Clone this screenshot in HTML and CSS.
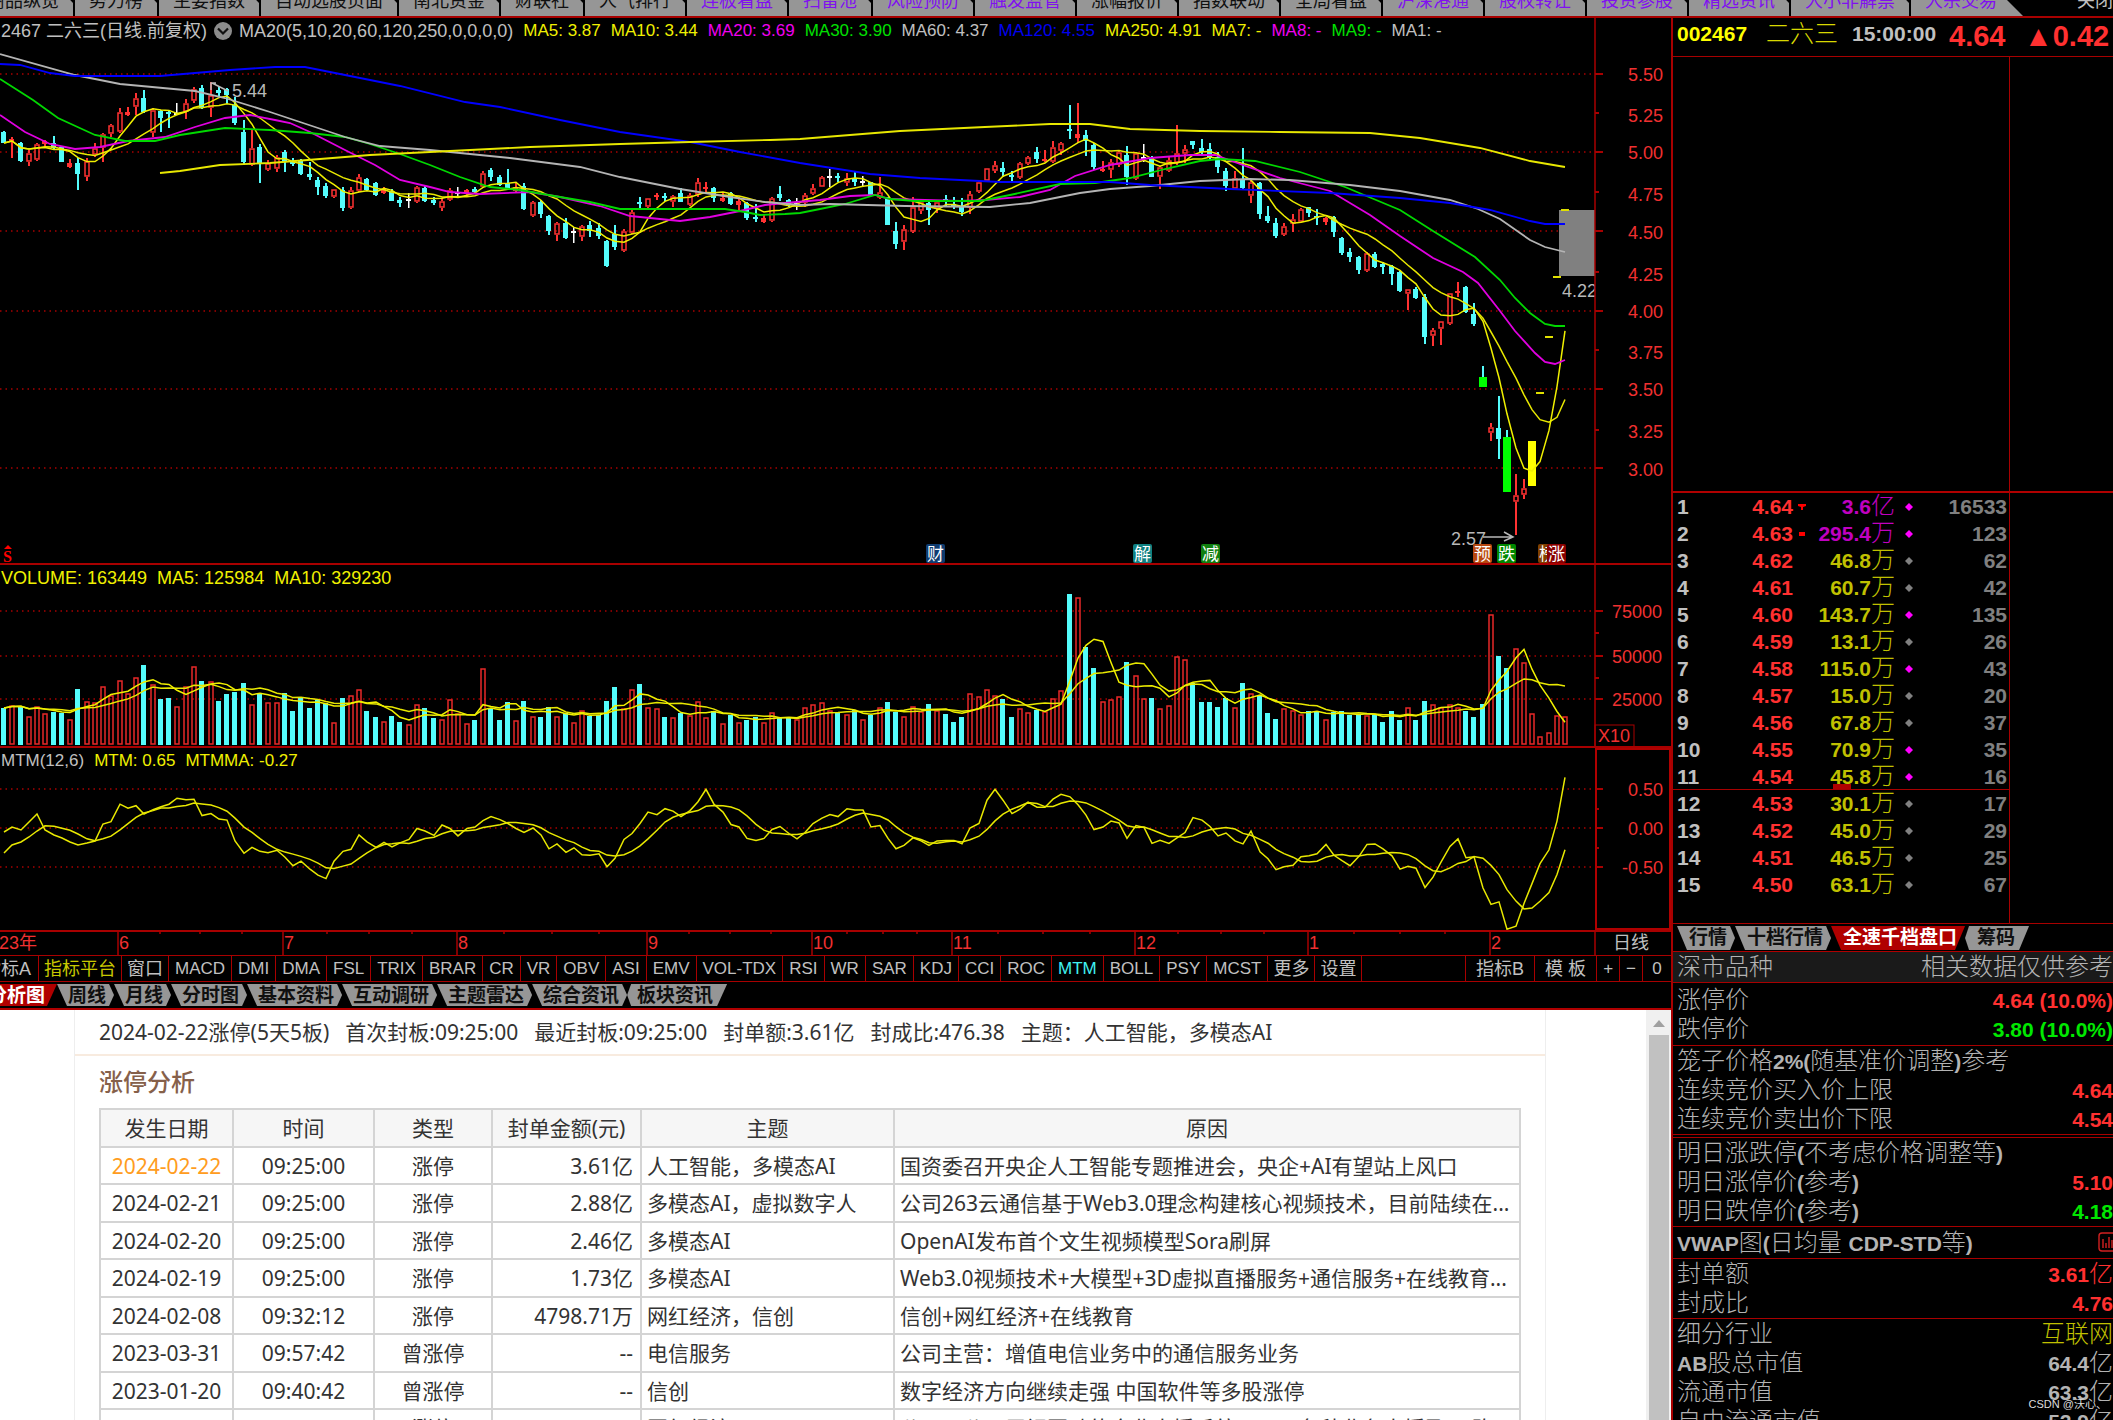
FILE: index.html
```html
<!DOCTYPE html>
<html lang="zh-CN">
<head>
<meta charset="utf-8">
<title>002467 二六三</title>
<link rel="stylesheet" href="styles.css">
</head>
<body>
<div class="app">
  <nav class="topbar">
    <a class="toptab toptab-cut" href="#">商品纵览</a><a class="toptab" href="#">势力榜</a><a class="toptab" href="#">主要指数</a><a class="toptab" href="#">自动选股页面</a><a class="toptab" href="#">南北资金</a><a class="toptab" href="#">财联社</a><a class="toptab" href="#">人气排行</a><a class="toptab hot" href="#">连板看盘</a><a class="toptab hot" href="#">扫雷池</a><a class="toptab hot" href="#">风险预防</a><a class="toptab hot" href="#">触发监管</a><a class="toptab" href="#">涨幅报价</a><a class="toptab" href="#">指数联动</a><a class="toptab" href="#">全局看盘</a><a class="toptab hot" href="#">沪深港通</a><a class="toptab hot" href="#">股权转让</a><a class="toptab hot" href="#">投资参股</a><a class="toptab hot" href="#">精选资讯</a><a class="toptab hot" href="#">大小非解禁</a><a class="toptab hot toptab-last" href="#">大宗交易</a>
    <button class="close" type="button">关闭</button>
  </nav>

  <main class="left">
    <section class="panel">
      <div class="legend">
        <span class="name">2467 二六三(日线.前复权)</span>
        <button class="drop" type="button" aria-label="展开"><svg width="20" height="20" viewBox="0 0 20 20"><circle cx="10" cy="10" r="9" fill="#8c8c8c"/><path d="M5 7.5l5 5 5-5" fill="none" stroke="#111" stroke-width="2.2"/></svg></button>
        <span class="name">MA20(5,10,20,60,120,250,0,0,0,0)</span>
        <span class="y">MA5: 3.87</span><span class="y">MA10: 3.44</span><span class="m">MA20: 3.69</span><span class="g">MA30: 3.90</span><span>MA60: 4.37</span><span class="b">MA120: 4.55</span><span class="y">MA250: 4.91</span><span class="y">MA7: -</span><span class="m">MA8: -</span><span class="g">MA9: -</span><span>MA1: -</span>
      </div>
      <svg id="price" class="chart" viewBox="0 18 1671 547"></svg>
    </section>
    <section class="panel">
      <div class="legend legend-vol"><span class="y">VOLUME: 163449</span><span class="y">MA5: 125984</span><span class="y">MA10: 329230</span></div>
      <svg id="volume" class="chart" viewBox="0 565 1671 183"></svg>
    </section>
    <section class="panel">
      <div class="legend"><span>MTM(12,6)</span><span class="y">MTM: 0.65</span><span class="y">MTMMA: -0.27</span></div>
      <svg id="mtm" class="chart" viewBox="0 748 1671 182"></svg>
    </section>
    <svg id="dates" class="chart" viewBox="0 930 1671 25"></svg>

    <div class="indicators">
      <button class="cjk ind-cut" type="button">指标A</button><button class="cjk on" type="button">指标平台</button><button class="cjk" type="button">窗口</button><button type="button">MACD</button><button type="button">DMI</button><button type="button">DMA</button><button type="button">FSL</button><button type="button">TRIX</button><button type="button">BRAR</button><button type="button">CR</button><button type="button">VR</button><button type="button">OBV</button><button type="button">ASI</button><button type="button">EMV</button><button type="button">VOL-TDX</button><button type="button">RSI</button><button type="button">WR</button><button type="button">SAR</button><button type="button">KDJ</button><button type="button">CCI</button><button type="button">ROC</button><button class="sel" type="button">MTM</button><button type="button">BOLL</button><button type="button">PSY</button><button type="button">MCST</button><button class="cjk" type="button">更多</button><button class="cjk" type="button">设置</button>
      <span class="fill"></span>
      <button class="cjk wide" type="button">指标B</button><button class="cjk wide" type="button">模 板</button><button type="button">+</button><button type="button">−</button><button class="end" type="button">0</button>
    </div>

    <nav class="tabs">
      <a class="tab active tab-cut" href="#">分析图</a><a class="tab" href="#">周线</a><a class="tab" href="#">月线</a><a class="tab" href="#">分时图</a><a class="tab" href="#">基本资料</a><a class="tab" href="#">互动调研</a><a class="tab" href="#">主题雷达</a><a class="tab" href="#">综合资讯</a><a class="tab last" href="#">板块资讯</a>
    </nav>

    <section class="report">
      <div class="sheet">
        <p class="summary"><span>2024-02-22涨停(5天5板)</span><span>首次封板:09:25:00</span><span>最近封板:09:25:00</span><span>封单额:3.61亿</span><span>封成比:476.38</span><span>主题：人工智能，多模态AI</span></p>
        <h2>涨停分析</h2>
        <table class="events">
          <colgroup><col class="c1"><col class="c2"><col class="c3"><col class="c4"><col class="c5"><col></colgroup>
          <thead><tr><th>发生日期</th><th>时间</th><th>类型</th><th>封单金额(元)</th><th>主题</th><th>原因</th></tr></thead>
          <tbody>
            <tr><td class="now">2024-02-22</td><td>09:25:00</td><td>涨停</td><td>3.61亿</td><td>人工智能，多模态AI</td><td>国资委召开央企人工智能专题推进会，央企+AI有望站上风口</td></tr>
            <tr><td>2024-02-21</td><td>09:25:00</td><td>涨停</td><td>2.88亿</td><td>多模态AI，虚拟数字人</td><td>公司263云通信基于Web3.0理念构建核心视频技术，目前陆续在...</td></tr>
            <tr><td>2024-02-20</td><td>09:25:00</td><td>涨停</td><td>2.46亿</td><td>多模态AI</td><td>OpenAI发布首个文生视频模型Sora刷屏</td></tr>
            <tr><td>2024-02-19</td><td>09:25:00</td><td>涨停</td><td>1.73亿</td><td>多模态AI</td><td>Web3.0视频技术+大模型+3D虚拟直播服务+通信服务+在线教育...</td></tr>
            <tr><td>2024-02-08</td><td>09:32:12</td><td>涨停</td><td>4798.71万</td><td>网红经济，信创</td><td>信创+网红经济+在线教育</td></tr>
            <tr><td>2023-03-31</td><td>09:57:42</td><td>曾涨停</td><td>--</td><td>电信服务</td><td>公司主营：增值电信业务中的通信服务业务</td></tr>
            <tr><td>2023-01-20</td><td>09:40:42</td><td>曾涨停</td><td>--</td><td>信创</td><td>数字经济方向继续走强 中国软件等多股涨停</td></tr>
            <tr><td>2022-11-25</td><td>09:36:10</td><td>涨停</td><td>2310.5万</td><td>网红经济</td><td>公司子公司展视互动的企业直播系统可用于各种业务直播及VR购</td></tr>
          </tbody>
        </table>
      </div>
      <div class="scroll"><span class="arrow"></span><span class="thumb"></span></div>
    </section>
  </main>

  <aside class="right">
    <header class="quote"><b class="code">002467</b><span class="stock">二六三</span><b class="time">15:00:00</b><b class="last-price">4.64</b><b class="change">▲0.42</b></header>
    <div class="book">
      <div class="bookmain">
        <div class="blank"></div>
        <table class="levels"><colgroup><col class="l1"><col class="l2"><col class="l3"><col class="l4"><col class="l5"><col></colgroup><tbody id="levels"></tbody></table>
      </div>
      <div class="bookside"><div class="blank"></div></div>
    </div>
    <nav class="tabs rtabs">
      <a class="tab" href="#">行情</a><a class="tab" href="#">十档行情</a><a class="tab active" href="#">全速千档盘口</a><a class="tab last" href="#">筹码</a>
    </nav>
    <dl class="info">
      <div class="grp head"><div><dt>深市品种</dt><dd>相关数据仅供参考</dd></div></div>
      <div class="grp two"><div><dt>涨停价</dt><dd class="up"><b>4.64 (10.0%)</b></dd></div><div><dt>跌停价</dt><dd class="down"><b>3.80 (10.0%)</b></dd></div></div>
      <div class="grp"><div><dt>笼子价格<b>2%(</b>随基准价调整<b>)</b>参考</dt><dd></dd></div><div><dt>连续竞价买入价上限</dt><dd class="up"><b>4.64</b></dd></div><div><dt>连续竞价卖出价下限</dt><dd class="up"><b>4.54</b></dd></div></div>
      <div class="grp double"><div><dt>明日涨跌停<b>(</b>不考虑价格调整等<b>)</b></dt><dd></dd></div><div><dt>明日涨停价<b>(</b>参考<b>)</b></dt><dd class="up"><b>5.10</b></dd></div><div><dt>明日跌停价<b>(</b>参考<b>)</b></dt><dd class="down"><b>4.18</b></dd></div></div>
      <div class="grp one"><div><dt><b>VWAP</b>图<b>(</b>日均量 <b>CDP-STD</b>等<b>)</b></dt><dd><svg class="mini" width="15" height="20" viewBox="0 0 15 20"><path d="M18 1H4Q1 1 1 4v12q0 3 3 3h14M5 16V7M8 16v-5M11 16V5M14 16V8" fill="none" stroke="#d02020" stroke-width="1.4"/></svg></dd></div></div>
      <div class="grp"><div><dt>封单额</dt><dd class="up"><b>3.61</b>亿</dd></div><div><dt>封成比</dt><dd class="up"><b>4.76</b></dd></div></div>
      <div class="grp"><div><dt>细分行业</dt><dd class="ind">互联网</dd></div><div><dt><b>AB</b>股总市值</dt><dd><b>64.4</b>亿</dd></div><div><dt>流通市值</dt><dd><b>63.3</b>亿</dd></div><div><dt>自由流通市值</dt><dd><b>52.9</b>亿</dd></div></div>
    </dl>
  </aside>
  <div class="mark">CSDN @沃心、</div>
</div>
<script src="chart.js"></script>
</body>
</html>
```
FILE: styles.css
```css
* { box-sizing: border-box; }
body { margin: 0; background: #000; color: #c0c0c0; font: 18px/24px "Liberation Sans", "Noto Sans CJK SC", sans-serif; }
a { text-decoration: none; color: inherit; }
button { font: inherit; color: inherit; background: none; border: 0; padding: 0; margin: 0; }

.app { position: relative; height: 100vh; overflow: hidden; display: grid; grid-template: 18px minmax(0, 1fr) / minmax(0, 1fr) 442px; }

/* page tabs along the top edge */
.topbar { grid-column: 1 / 3; display: flex; align-items: flex-end; overflow: hidden; border-bottom: 2px solid #a80000; white-space: nowrap; }
.toptab { flex: none; height: 30px; line-height: 30px; padding: 0 16px 0 14px; background: #969696; color: #101010; clip-path: polygon(0 0, calc(100% - 18px) 0, calc(100% - 2px) 17px, calc(100% - 2px) 100%, 0 100%); }
.toptab-cut { width: 75px; display: flex; justify-content: flex-end; }
.toptab.hot { color: #8010f0; }
.toptab-last { width: 112px; clip-path: polygon(0 0, calc(100% - 30px) 0, 100% 100%, 0 100%); }
.close { flex: 1; height: 30px; line-height: 30px; text-align: right; }

.left { display: flex; flex-direction: column; min-width: 0; min-height: 0; }
.panel { position: relative; }
.chart { display: block; width: 100%; height: auto; flex: none; }
.chart text { font-family: "Liberation Sans", "Noto Sans CJK SC", sans-serif; font-size: 18px; }
.legend { position: absolute; left: 1px; top: 1px; display: flex; align-items: center; gap: 10px; font-size: 17px; white-space: nowrap; }
.legend .name { font-size: 18px; }
.legend-vol { font-size: 18px; }
.legend .drop { display: flex; margin: 0 -4px; }
.y { color: #f0f000; }
.m { color: #f000f0; }
.g { color: #00e000; }
.b { color: #0000f0; }

.indicators { display: flex; flex: none; height: 27px; border-top: 1px solid #a80000; border-bottom: 1px solid #a80000; font-size: 17px; overflow: hidden; }
.indicators button { flex: none; padding: 0 6px; border-right: 1px solid #a80000; white-space: nowrap; }
.indicators .cjk { font-size: 18px; padding: 0 5px; }
.indicators .ind-cut { width: 39px; display: flex; justify-content: flex-end; align-items: center; padding-right: 7px; }
.indicators .on { color: #c8c800; }
.indicators .sel { color: #40f0f0; }
.indicators .fill { flex: 1; border-right: 1px solid #a80000; }
.indicators .wide { padding: 0 10px; }
.indicators .end { width: 28px; border-right: 0; }

.tabs { display: flex; flex: none; height: 28px; padding: 2px 0; border-bottom: 2px solid #b00000; font-size: 19px; line-height: 24px; font-weight: 700; white-space: nowrap; }
.tab { padding: 0 8px 0 11px; background: #969696; color: #101010; clip-path: polygon(0 0, calc(100% - 5px) 0, 100% 50%, calc(100% - 5px) 100%, 10px 100%); }
.tab.active { background: #b00000; color: #fff; clip-path: polygon(0 0, 100% 0, calc(100% - 10px) 100%, 10px 100%); }
.tab.last { clip-path: polygon(4px 0, 100% 0, calc(100% - 10px) 100%, 4px 100%, 0 50%); padding-right: 14px; padding-left: 10px; }
.tab-cut { width: 57px; display: flex; justify-content: flex-end; padding-right: 12px; }
.tab-cut.active { clip-path: polygon(0 0, 100% 0, calc(100% - 10px) 100%, 0 100%); }

.report { flex: 1; min-height: 0; overflow: hidden; display: flex; justify-content: space-between; background: #fff; color: #333; font: 21px/30px "Noto Sans", "Noto Sans CJK SC", sans-serif; }
.sheet { flex: 1; margin: 0 100px 0 74px; border: solid #eee; border-width: 0 1px; }
.summary { margin: 0; padding: 7px 24px 7px; height: 46px; border-bottom: 2px solid #f8ebdf; display: flex; gap: 16px; white-space: nowrap; }
.sheet h2 { margin: 0 24px; height: 52px; line-height: 52px; font-size: 24px; font-weight: 500; color: #86604a; }
.events { width: calc(100% - 48px); margin: 0 24px; border-collapse: collapse; table-layout: fixed; }
.events tr { height: 37px; }
.events tr:nth-child(even) { height: 38px; }
.events th, .events td { border: 2px solid #d4d4d4; padding: 0 5px; font-weight: 400; text-align: center; white-space: nowrap; overflow: hidden; }
.events th { background: #f6f6f6; height: 38px; }
.events td:nth-child(4) { text-align: right; padding-right: 7px; }
.events td:nth-child(n+5) { text-align: left; }
.events .now { color: #ff9c20; }
.c1 { width: 133px; }
.c2 { width: 141px; }
.c3 { width: 118px; }
.c4 { width: 149px; }
.c5 { width: 253px; }
.scroll { width: 25px; background: #f0f0f0; display: flex; flex-direction: column; align-items: center; }
.arrow { margin: 10px 0 8px; border: 6px solid transparent; border-top: 0; border-bottom: 7px solid #a0a0a0; }
.thumb { flex: 1; width: 20px; background: #c1c1c1; }

.right { display: flex; flex-direction: column; min-height: 0; overflow: hidden; border-left: 2px solid #a80000; white-space: nowrap; }
.quote { display: flex; align-items: center; height: 39px; flex: none; padding: 0 0 6px 4px; border-bottom: 1px solid #a80000; font-size: 21px; }
.code { color: #ff0; width: 89px; }
.stock { color: #d8d800; font-size: 24px; font-weight: 300; width: 86px; }
.time { width: 97px; }
.last-price, .change { color: #ff3030; font-size: 29px; padding-top: 4px; }
.last-price { width: 75px; }

.book { display: flex; flex: none; border-bottom: 1px solid #a80000; }
.bookmain { width: 337px; border-right: 1px solid #a80000; padding-bottom: 25px; }
.bookside { flex: 1; }
.blank { height: 436px; border-bottom: 2px solid #b00000; }
.levels { border-collapse: collapse; table-layout: fixed; width: 100%; font-size: 21px; font-weight: 700; }
.levels td { padding: 0; text-align: right; line-height: 27px; height: 27px; }
.levels td:first-child { text-align: left; padding-left: 4px; }
.levels td:last-child { color: #808080; padding-right: 2px; }
.levels .price { color: #ff3030; }
.levels .unit { font-size: 24px; font-weight: 300; line-height: 20px; }
.levels .amt { color: #c0c000; }
.levels .big { color: #c000c0; }
.levels svg { display: block; margin: 0 auto; }
.levels .split td { box-shadow: inset 0 -1px #a80000; }
.levels .split .amt { background: linear-gradient(#b00000, #b00000) 22px 21px / 18px 5px no-repeat; }
.l1 { width: 49px; }
.l2 { width: 71px; }
.l3 { width: 18px; }
.l4 { width: 84px; }
.l5 { width: 28px; }

.rtabs { padding: 2px 0 1px 4px; height: 28px; border-bottom-width: 1px; }
.rtabs .tab { padding-left: 12px; }

.info { margin: 0; font-size: 24px; font-weight: 300; line-height: 29px; color: #b4b4b4; }
.info b { font-size: 21px; font-weight: 700; }
.grp { border-bottom: 1px solid #a80000; padding-bottom: 1px; }
.grp > div { display: flex; justify-content: space-between; height: 29px; padding-left: 4px; }
.head { background: #1a1a1a; }
.two { padding: 2px 0; }
.one { padding: 1px 0; }
.double { border-top: 1px solid #a80000; margin-top: 2px; }
.info dd { margin: 0; }
.info .up { color: #ff3030; }
.info .down { color: #00e800; }
.info .ind { color: #c0c000; }
.mini { display: block; margin-top: 4px; }

.mark { position: absolute; right: 6px; bottom: 6px; font-size: 11px; line-height: 20px; color: #ddd; }
```
FILE: chart.js
```js
// Candles: colour letter, wick top, body top, body bottom, wick bottom.
const CANDLES = `c131,132,143,143 r137,139,141,158 c142,143,161,162 r150,153,162,166 r143,144,160,161 r140,141,144,147 c136,143,148,150 c146,147,162,162 r159,163,167,168 c158,163,174,190
r158,161,177,181 r143,148,155,157 r133,134,148,162 r124,125,134,137 r108,112,132,133 r107,112,115,116 r93,98,107,115 c90,98,112,113 r108,110,133,137 c110,111,118,132
c110,112,114,128 w103,113,114,115 r99,103,112,119 r87,89,101,103 c85,88,108,109 r82,95,108,117 c86,90,93,97 c88,89,95,104 c97,105,123,125 c120,132,162,164
r130,148,165,166 c144,147,164,183 r160,163,170,171 r155,157,169,172 c150,152,161,172 c158,161,164,166 c159,161,174,175 c162,174,177,180 c177,180,187,195 c183,186,196,198
r189,189,197,198 c187,190,208,211 r187,190,208,209 r174,177,191,192 c178,179,190,191 c182,183,195,196 r187,189,193,194 c189,191,201,201 c197,200,203,207 w193,199,201,208
r186,187,202,203 c186,188,201,202 c197,200,203,205 r198,201,208,211 r188,190,200,201 w187,192,193,197 r189,190,193,195 c187,189,192,193 r171,173,187,188 c168,170,177,181
c175,177,185,186 c169,183,189,190 r183,187,191,192 c183,186,209,210 r201,202,216,217 c200,202,214,218 c215,216,231,235 r222,223,235,241 c218,223,238,239 w227,231,232,243
r225,226,237,241 c221,225,231,237 c223,228,236,239 c240,241,266,267 c225,234,247,250 r229,231,251,252 r209,212,233,234 c197,202,204,208 r198,198,207,208 r193,195,197,200
c193,196,198,201 r195,196,202,207 c188,193,202,202 r193,195,205,206 r178,182,195,197 r182,187,189,192 c187,188,198,202 r193,198,201,202 c192,193,204,205 r198,201,205,212
c202,203,218,220 c204,217,219,222 r215,218,222,223 r197,198,221,222 c186,194,198,201 c199,200,205,207 w198,203,205,210 r193,195,203,207 r184,188,194,195 r176,177,187,187
w169,176,177,187 c173,176,177,182 r173,178,183,186 c172,178,182,186 w176,181,182,187 c182,182,195,196 r177,192,198,199 c197,197,225,225 c222,231,244,249 r225,229,242,250
r197,207,232,233 r201,202,211,214 c200,203,210,225 r200,202,209,213 c195,199,202,207 c197,204,206,209 c198,207,212,216 r191,194,208,214 r181,182,192,193 r168,168,181,182
r161,165,171,173 c162,168,172,177 c171,175,177,182 r162,163,178,179 r156,157,164,165 c147,152,159,163 r150,159,161,162 r141,147,162,163 r142,143,151,155 c105,129,130,139
r103,134,138,143 c130,135,141,156 c143,145,167,170 r161,169,171,172 r159,162,170,178 r150,152,165,167 c146,155,177,185 r152,153,179,180 w144,157,158,162 c156,157,177,177
r166,167,177,189 r156,160,171,172 r125,153,163,165 r145,149,154,163 c141,141,145,149 c139,148,152,156 c143,149,158,160 c152,157,167,173 c168,171,186,191 r171,178,189,190
c148,180,188,189 r179,182,196,203 c182,183,214,219 c206,216,221,223 c218,223,236,238 r223,226,235,236 r214,219,224,232 r208,209,222,222 c207,207,213,217 c209,216,218,225
r217,218,222,225 c216,217,232,237 c237,238,253,255 c248,252,257,262 c256,257,270,274 r252,253,271,272 c252,254,267,268 c262,264,267,274 c265,266,274,285 c271,272,291,292
r289,289,294,310 c287,289,298,299 c294,297,337,344 r328,330,336,346 r321,321,329,345 r293,293,324,325 r282,291,293,297 c286,287,312,313 c303,314,324,326 G366,377,387,387
r423,427,433,441 c396,428,439,459 G430,437,492,492 r474,495,502,535 r479,488,495,499 Y441,441,486,487 D392,392,392,392 D336,336,336,336 D276,276,276,276 D209,209,209,209`
  .split(/\s+/).map(s => [s[0], ...s.slice(1).split(',').map(Number)]);

// Bar heights of the volume pane, in thirds of a unit.
const VOLUME = [111,120,118,87,118,95,100,97,78,169,133,128,178,150,196,155,205,241,182,137,142,118,178,237,192,192,133,152,160,187,
123,155,128,128,155,101,145,111,135,127,69,142,150,168,101,84,73,88,70,62,123,111,80,78,137,95,65,75,232,110,
75,128,74,133,87,85,115,87,95,70,105,88,90,133,174,110,168,182,115,110,84,83,95,90,132,83,103,65,90,69,
75,85,70,100,80,82,78,115,123,128,105,95,92,105,78,90,115,128,100,88,118,103,123,105,93,70,84,155,146,168,
150,137,84,110,100,105,103,141,165,452,443,295,232,132,137,146,250,209,142,141,110,119,268,258,187,128,128,115,142,115,
187,155,150,97,79,110,105,92,101,99,78,100,101,90,89,90,90,70,101,74,115,74,133,124,115,123,115,103,84,124,
394,268,232,290,250,97,28,38,90,87];

// Momentum before the first twelve sessions close, as pane heights.
const MTM_START = [832, 827, 830, 822, 814, 830, 835, 838, 842, 845, 843, 841];
const MTMMA_START = [853, 845, 842, 837, 831];

const SLOW = [
  ['#e000e0', '0,115 25,132 50,144 75,149 100,147 128,141 165,137 195,127 225,118 250,115 275,120 290,123 310,132 345,150 375,165 400,180 430,187 450,192 480,194 530,192 560,197 600,206 630,216 680,221 710,217 740,211 765,205 785,203 820,200 850,196 875,195 890,199 960,201 985,200 1020,197 1050,190 1075,176 1110,165 1150,158 1190,155 1215,155 1240,164 1280,178 1330,191 1370,215 1400,236 1433,258 1463,272 1478,283 1500,311 1515,331 1535,353 1545,362 1555,364 1565,360'],
  ['#00d800', '0,79 33,100 58,118 95,135 125,141 155,141 180,135 225,128 270,130 310,133 345,137 370,144 400,154 430,165 460,177 490,187 520,190 560,197 590,202 620,209 725,209 745,212 760,215 785,214 800,213 820,209 845,204 875,195 890,199 915,201 980,201 1010,195 1060,184 1095,183 1130,178 1165,169 1200,161 1220,159 1255,161 1300,172 1345,187 1400,210 1433,231 1475,257 1500,280 1515,298 1530,313 1545,324 1555,326 1565,326'],
  ['#b4b4b4', '0,54 75,75 120,84 195,91 225,98 270,112 300,122 345,137 380,146 430,150 510,158 580,167 620,177 680,189 730,197 765,202 800,205 830,204 905,206 990,207 1030,203 1080,193 1110,189 1150,186 1200,181 1250,179 1290,180 1350,185 1400,191 1450,200 1478,209 1500,219 1530,240 1545,247 1565,252'],
  ['#0000ff', '0,64 20,65 50,73 75,76 160,76 230,70 275,67 305,67 330,72 400,86 465,102 500,107 560,120 620,132 690,142 740,152 800,163 870,174 920,178 1000,182 1110,182 1150,185 1230,189 1330,193 1400,198 1450,203 1490,210 1530,221 1545,224 1565,224'],
  ['#e8e800', '160,173 180,171 220,165 270,163 320,159 370,155 430,152 530,147 620,144 690,142 770,140 800,139 850,135 900,131 985,127 1050,124 1090,124 1130,129 1200,131 1280,132 1370,133 1420,138 1480,148 1530,161 1565,167']
];

const RED = '#a80000', X = i => Math.round(4 + 8.26 * i);
const INK = { c: '#54fcfc', r: '#ff3232', w: '#ffffff', G: '#00ff00', Y: '#ffff00', D: '#ffff00' };
const rect = (x, y, w, h, fill, more = '') => `<rect x="${x}" y="${y}" width="${w}" height="${h}" fill="${fill}" ${more}/>`;
const line = (x1, y1, x2, y2, c = RED, w = 2) => `<path d="M${x1} ${y1}L${x2} ${y2}" stroke="${c}" stroke-width="${w}"/>`;
const poly = (pts, c, w = 1.5) => `<polyline points="${pts}" fill="none" stroke="${c}" stroke-width="${w}"/>`;
const text = (x, y, s, c = '#f03030', more = '') => `<text x="${x}" y="${y}" fill="${c}" ${more}>${s}</text>`;
const dots = y => `<path d="M0 ${y}H1595" stroke="#a80000" stroke-width="1.5" stroke-dasharray="1.5 4"/>`;
const series = ys => ys.map((y, i) => X(i) + ',' + y.toFixed(1)).join(' ');
const mean = (a, n) => a.map((_, i) => { const s = a.slice(Math.max(0, i - n + 1), i + 1); return s.reduce((p, q) => p + q) / s.length; });

const close = CANDLES.map(([k, , top, bottom]) => (k === 'c' || k === 'G' ? bottom : top));

function candle([k, hi, top, bottom, lo], i) {
  const x = X(i), c = INK[k];
  if (k === 'D') return rect(x - 4, top, 8, 2, '#e0e000');
  if (k === 'Y') return rect(x - 4, top, 8, bottom - top, c);
  if (k === 'G') return rect(x - 1, hi, 2, top - hi, INK.c) + rect(x - 4, top, 8, bottom - top, c);
  if (k === 'w') return rect(x - 1, hi, 1.5, lo - hi, c) + rect(x - 3, top, 5, 2, c);
  const wick = rect(x - 1, hi, 2, top - hi, c) + rect(x - 1, bottom, 2, lo - bottom, c);
  if (k === 'r' && bottom - top > 4) return wick + rect(x - 2, top + 1, 4, bottom - top - 2, 'none', `stroke="${c}" stroke-width="1.5"`);
  return wick + rect(x - 3, top, 5, Math.max(2, bottom - top), c);
}

function pricePane() {
  let s = [74, 152, 231, 311, 389, 468].map(y => dots(y) + line(1595, y, 1603, y)).join('');
  s += [113, 192, 272, 350, 430].map(y => line(1595, y, 1599, y)).join('');
  [74, 115, 152, 194, 232, 274, 311, 352, 389, 431, 469].forEach((y, i) => { s += text(1628, y + 7, (5.5 - i * 0.25).toFixed(2)); });
  s += rect(1559, 210, 36, 66, '#808080');
  s += CANDLES.map(candle).join('');
  s += poly(series(mean(close, 10)), '#e8e800') + poly(series(mean(close, 5)), '#f0f000');
  s += SLOW.map(([c, p]) => poly(p, c, 1.8)).join('');
  s += text(232, 97, '5.44', '#b8b8b8') + '<path d="M211 90V83h5M212 83l16 8" fill="none" stroke="#b8b8b8" stroke-width="1.5"/>';
  s += text(1451, 545, '2.57', '#b8b8b8') + '<path d="M1483 537h29M1504 532l9 5-9 4" fill="none" stroke="#b8b8b8" stroke-width="1.5"/>';
  s += `<svg x="1562" y="278" width="33" height="26">${text(0, 19, '4.22', '#b8b8b8')}</svg>`;
  s += [[926, '财', '#103c70'], [1133, '解', '#108080'], [1201, '减', '#108010'], [1473, '预', '#b84810'], [1497, '跌', '#008800'], [1538, '榜', '#804000'], [1547, '涨', '#880000']]
    .map(([x, t, c]) => rect(x, 544, 19, 19, c, 'rx="2"') + text(x + 1, 560, t, '#fff', 'style="font-size:17px"')).join('');
  s += '<path d="M4 549l4-4 4 4z" fill="#f00"/>' + text(3, 562, 'S', '#f00', 'style="font:bold 16px Liberation Serif,serif"');
  s += line(0, 564, 1671, 564) + line(1595, 18, 1595, 565, RED, 1.5);
  return s;
}

function volumePane() {
  let s = [[611, 75000], [656, 50000], [699, 25000]].map(([y, v]) => dots(y) + line(1595, y, 1603, y) + text(1612, y + 7, v)).join('');
  s += [633, 678].map(y => line(1595, y, 1599, y)).join('');
  const top = VOLUME.map(v => 745 - v / 3);
  s += top.map((t, i) => {
    const k = CANDLES[i][0], y = Math.round(t), x = X(i);
    return k === 'c' || k === 'G' ? rect(x - 3, y, 5, 745 - y, INK.c) : rect(x - 2, y + 1, 4, 743 - y, 'none', `stroke="#e82828" stroke-width="1.5"`);
  }).join('');
  s += poly(series(mean(top, 10)), '#e8e800') + poly(series(mean(top, 5)), '#f0f000');
  s += line(1595, 565, 1595, 748, RED, 1.5) + rect(1595, 725, 39, 22, 'none', `stroke="${RED}"`) + text(1598, 742, 'X10');
  return s + line(0, 747, 1671, 747);
}

function mtmPane() {
  let s = [[789, '0.50'], [828, '0.00'], [867, '-0.50']].map(([y, v]) => dots(y) + line(1595, y, 1603, y) + text(1663, y + 7, v, '#f03030', 'text-anchor="end"')).join('');
  s += [809, 848].map(y => line(1595, y, 1599, y)).join('');
  const m = close.map((c, i) => (i < 12 ? MTM_START[i] : 828.5 - (close[i - 12] - c) * 0.496));
  const a = mean(m, 6).map((v, i) => (i < 5 ? MTMMA_START[i] : v));
  s += poly(series(m), '#e8e800') + poly(series(a), '#e8e800');
  return s + rect(1596, 749, 74, 180, 'none', 'stroke="#b00000" stroke-width="2"');
}

function dateAxis() {
  let s = line(0, 931, 1671, 931) + line(1595, 930, 1595, 955, RED, 1.5) + text(-1, 949, '23年') + text(1613, 949, '日线', '#c0c0c0');
  s += [[118, 6], [283, 7], [457, 8], [647, 9], [812, 10], [952, 11], [1135, 12], [1308, 1], [1490, 2]].map(([x, m]) => line(x, 931, x, 955, RED, 1.5) + text(x + 1, 949, m)).join('');
  s += [160, 200, 242, 327, 369, 412, 504, 552, 599, 689, 730, 771, 847, 883, 917, 998, 1043, 1090, 1178, 1221, 1264, 1354, 1400, 1445].map(x => line(x, 931, x, 934, RED, 1.5)).join('');
  return s;
}

document.getElementById('price').innerHTML = pricePane();
document.getElementById('volume').innerHTML = volumePane();
document.getElementById('mtm').innerHTML = mtmPane();
document.getElementById('dates').innerHTML = dateAxis();

// Order book levels: price, amount, unit, strong flag, order count.
const LEVELS = [['4.64', '3.6', '亿', 1, 16533], ['4.63', '295.4', '万', 1, 123], ['4.62', '46.8', '万', 0, 62], ['4.61', '60.7', '万', 0, 42], ['4.60', '143.7', '万', 1, 135],
  ['4.59', '13.1', '万', 0, 26], ['4.58', '115.0', '万', 1, 43], ['4.57', '15.0', '万', 0, 20], ['4.56', '67.8', '万', 0, 37], ['4.55', '70.9', '万', 1, 35],
  ['4.54', '45.8', '万', 1, 16], ['4.53', '30.1', '万', 0, 17], ['4.52', '45.0', '万', 0, 29], ['4.51', '46.5', '万', 0, 25], ['4.50', '63.1', '万', 0, 67]];
const MARKS = ['<svg width="8" height="7"><path d="M0 1h8v2L5 4v3H3V4L0 3z" fill="#f00"/></svg>', '<svg width="8" height="7"><path d="M1 2h6v4H1z" fill="#f00"/></svg>'];
document.getElementById('levels').innerHTML = LEVELS.map(([p, a, u, hot, n], i) =>
  `<tr${i === 10 ? ' class="split"' : ''}><td>${i + 1}</td><td class="price">${p}</td><td>${MARKS[i] || ''}</td><td class="amt${i < 2 ? ' big' : ''}">${a}<span class="unit">${u}</span></td>` +
  `<td><svg width="8" height="10"><path d="M4 1l4 4-4 4-4-4z" fill="${hot ? '#f0f' : '#808080'}"/></svg></td><td>${n}</td></tr>`).join('');
```
